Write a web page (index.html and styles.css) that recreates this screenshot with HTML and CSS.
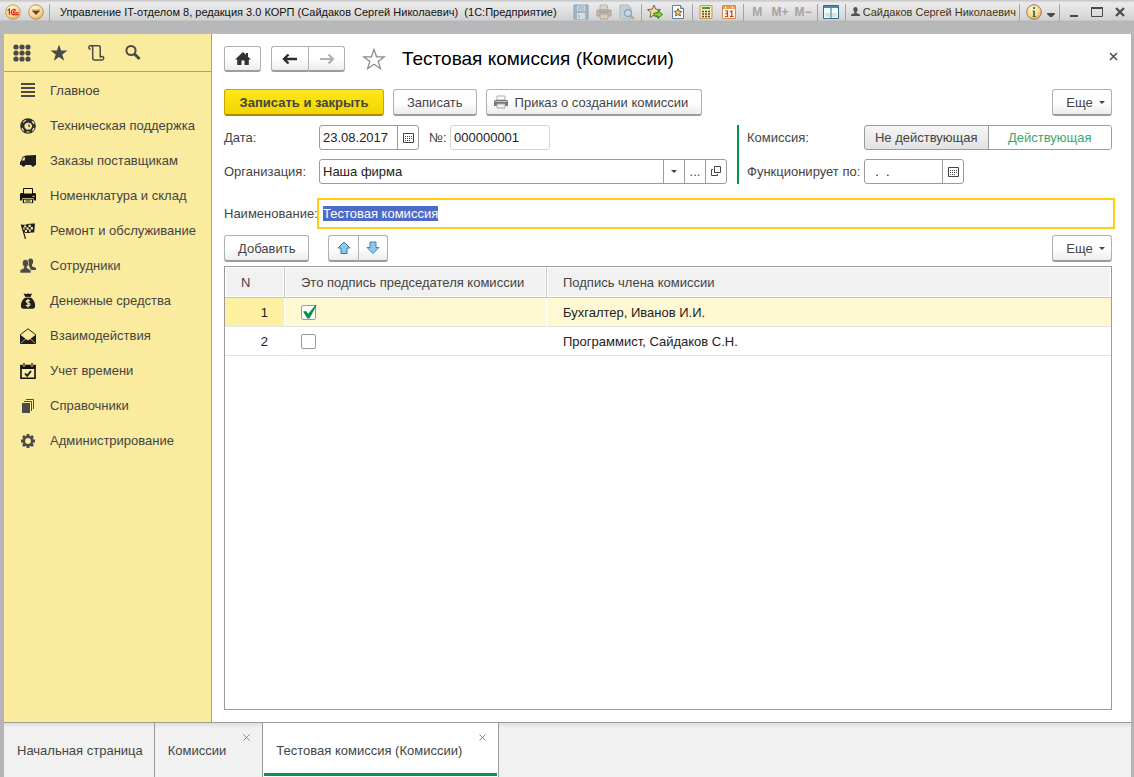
FILE: index.html
```html
<!DOCTYPE html>
<html lang="ru">
<head>
    <meta charset="UTF-8">
    <meta name="viewport" content="width=device-width, initial-scale=1.0">
    <title>Тестовая комиссия (Комиссии)</title>
    <link rel="stylesheet" href="styles.css">
</head>
<body>
    <header class="titlebar">
        <button class="tb-btn" aria-label="1С">
            <svg width="16" height="16" viewBox="0 0 16 16"><defs><radialGradient id="orb" cx=".4" cy=".3" r=".8"><stop offset="0" stop-color="#fff6d8"/><stop offset=".6" stop-color="#fbd78c"/><stop offset="1" stop-color="#d79a4a"/></radialGradient></defs><circle cx="8" cy="8" r="7.3" fill="url(#orb)" stroke="#b89468" stroke-width=".8"/><path d="M2.600 6.600l1.800-1.500v5.600M10.600 6.500C9.800 4.700 6.300 5.100 6.300 7.900c0 2 1.400 2.800 2.800 2.800h4.500M10.300 7.300c-1-.6-2-.3-2 .6 0 .8.700 1 1.500 1h3.800" fill="none" stroke="#dd2418" stroke-width="1.200"/></svg>
        </button>
        <button class="tb-btn tb-menu" aria-label="Главное меню">
            <svg width="16" height="16" viewBox="0 0 16 16"><circle cx="8" cy="8" r="7.3" fill="url(#orb)" stroke="#a88a68" stroke-width=".8"/><path d="M4 5.500h8V7H4z" fill="#b8966c"/><path d="M4 7h8l-4 4z" fill="#5e4a35"/></svg>
        </button>
        <span class="tb-sep"></span>
        <span class="tb-title">Управление IT-отделом 8, редакция 3.0 КОРП (Сайдаков Сергей Николаевич)&nbsp; (1С:Предприятие)</span>
        <div class="tb-tools">
            <button class="tb-btn" aria-label="Сохранить" disabled>
                <svg width="16" height="16" viewBox="0 0 16 16"><path d="M1 1h14v14H1z" fill="#9fb7c4" stroke="#86a2b2"/><path d="M4 1.500h8v5H4zM4 9h8v6H4z" fill="#d6dde0"/><path d="M5 3h6M5 5h6M6 11v3" stroke="#8fa8b5"/></svg>
            </button>
            <button class="tb-btn" aria-label="Печать" disabled>
                <svg width="16" height="16" viewBox="0 0 16 16"><path d="M4 1h7l1 5H4z" fill="#d8d6d4" stroke="#b5b0aa"/><path d="M1 6h14v6H1z" fill="#bdb8b3" stroke="#a8a29b"/><path d="M4 10h8v5H4z" fill="#d8cbbb" stroke="#b5a693"/><path d="M3 8h10" stroke="#999"/></svg>
            </button>
            <button class="tb-btn" aria-label="Просмотр" disabled>
                <svg width="16" height="16" viewBox="0 0 16 16"><path d="M1 1h8l3 3v11H1z" fill="#c3d0d7" stroke="#a9b9c2"/><circle cx="9" cy="9" r="3.5" fill="#c5d8e3" stroke="#8ba5b7" stroke-width="1.500"/><path d="M11.500 11.500l3.500 3.500" stroke="#b9a48c" stroke-width="2"/></svg>
            </button>
            <span class="tb-sep"></span>
            <button class="tb-btn" aria-label="Добавить в избранное">
                <svg width="16" height="16" viewBox="0 0 16 16"><path d="M7 1l1.800 4.200 4.700.4-3.500 3 1 4.900L7 11l-4 2.500 1-4.900-3.500-3 4.700-.4z" fill="#f6d9a0" stroke="#806449"/><path d="M7 9h4V6.500l4.500 4-4.500 4V12H7z" fill="#8fd53c" stroke="#2f7a1e"/></svg>
            </button>
            <button class="tb-btn" aria-label="Избранное">
                <svg width="16" height="16" viewBox="0 0 16 16"><path d="M2.500 1.500h8l3 3v10h-11z" fill="#fff" stroke="#5b7f99"/><path d="M10.500 1.500v3h3" fill="#cfe0ea" stroke="#5b7f99"/><path d="M8 4.500l1.200 2.600 2.700.2-2.100 1.900.7 2.800L8 10.500 5.500 12l.7-2.800-2.100-1.900 2.700-.2z" fill="#f1c16e" stroke="#5d4b3c" stroke-width=".8"/></svg>
            </button>
            <span class="tb-sep"></span>
            <button class="tb-btn" aria-label="Калькулятор">
                <svg width="16" height="16" viewBox="0 0 16 16"><path d="M2 1.500h12v13H2z" fill="#fbe9b7" stroke="#c2965a"/><path d="M4 3h8v2H4z" fill="#3f9b48"/><path d="M4 7.500h8M4 10h8M4 12.500h8" stroke="#624a2c" stroke-width="1.500" stroke-dasharray="2 1"/></svg>
            </button>
            <button class="tb-btn" aria-label="Календарь">
                <svg width="16" height="16" viewBox="0 0 16 16"><path d="M1.500 1.500h13v13h-13z" fill="#fff7ea" stroke="#c98d55"/><path d="M2 2h12v3H2z" fill="#ee9d55"/><path d="M4 3.500h1M11 3.500h1" stroke="#fff" stroke-width="2"/><path d="M4 7h2.500v5.500H4M4.500 9.700h2M9 8l1.800-1v6M9 12.500h3.500" fill="none" stroke="#dd3311" stroke-width="1.200"/></svg>
            </button>
            <span class="tb-sep"></span>
            <button class="tb-btn tb-mem" disabled>M</button>
            <button class="tb-btn tb-mem" disabled>M+</button>
            <button class="tb-btn tb-mem" disabled>M−</button>
            <span class="tb-sep"></span>
            <button class="tb-btn" aria-label="Панели">
                <svg width="16" height="16" viewBox="0 0 16 16"><path d="M.5 1.500h15v13H.5z" fill="#f4fafc" stroke="#376b84"/><path d="M1 2h14v2H1z" fill="#478ca8"/><path d="M8 4v10" stroke="#376b84"/><path d="M2 9h5v4H2zM9 9h5v4H9z" fill="#d2e5ee"/></svg>
            </button>
            <span class="tb-sep"></span>
            <a class="tb-user" href="#">
                <svg width="9" height="10" viewBox="0 0 9 10"><path d="M4.500 0C6 0 6.800 1 6.600 2.700 6.500 4 6 4.600 5.500 5v1L9 7.500V9H0V7.500L3.500 6V5C3 4.600 2.500 4 2.400 2.700 2.200 1 3 0 4.500 0z" fill="#555"/></svg>
                Сайдаков Сергей Николаевич
            </a>
            <span class="tb-sep"></span>
            <button class="tb-btn" aria-label="Справка">
                <svg width="16" height="16" viewBox="0 0 16 16"><circle cx="8" cy="8" r="7.3" fill="url(#orb)" stroke="#927b5d"/><path d="M7 3h2v2H7zM6.500 6.500H9V12h1v1H6.500v-1H7V7.500h-.5z" fill="#53793a"/></svg>
            </button>
            <button class="tb-btn tb-drop" aria-label="Ещё">
                <svg width="8" height="5" viewBox="0 0 8 5"><path d="M0 0h8v1L5 4H3L0 1z" fill="#4c4c4c"/></svg>
            </button>
            <span class="tb-sep"></span>
            <button class="tb-btn" aria-label="Свернуть">
                <svg width="12" height="12" viewBox="0 0 12 12"><path d="M2 9h8v2H2z" fill="#4a4a4a"/></svg>
            </button>
            <button class="tb-btn" aria-label="Развернуть">
                <svg width="12" height="12" viewBox="0 0 12 12"><path d="M.5 2h11v8.500H.5z" fill="none" stroke="#4a4a4a"/><path d="M0 2h12" stroke="#4a4a4a" stroke-width="2"/></svg>
            </button>
            <button class="tb-btn" aria-label="Закрыть">
                <svg width="12" height="12" viewBox="0 0 12 12"><path d="M2 2l8 8M10 2l-8 8" stroke="#4a4a4a" stroke-width="2.200"/></svg>
            </button>
        </div>
    </header>

    <div class="workspace">
        <aside class="sidebar">
            <div class="side-tools">
                <button aria-label="Меню">
                    <svg width="18" height="18" viewBox="0 0 18 18" fill="#4a4a4a"><circle cx="3" cy="3" r="2.600"/><circle cx="9" cy="3" r="2.600"/><circle cx="15" cy="3" r="2.600"/><circle cx="3" cy="9" r="2.600"/><circle cx="9" cy="9" r="2.600"/><circle cx="15" cy="9" r="2.600"/><circle cx="3" cy="15" r="2.600"/><circle cx="9" cy="15" r="2.600"/><circle cx="15" cy="15" r="2.600"/></svg>
                </button>
                <button aria-label="Избранное">
                    <svg width="18" height="18" viewBox="0 0 18 18"><path d="M9 .5l2.100 6h6.400l-5.200 3.900 2 6.300L9 12.900l-5.300 3.800 2-6.300L.5 6.500h6.400z" fill="#4a4a4a"/></svg>
                </button>
                <button aria-label="История">
                    <svg width="18" height="18" viewBox="0 0 18 18"><path d="M3.500 5.200a1.800 1.800 0 1 1 .7-3.500h7.800q1.200 0 1.200 1.300V13M4.200 1.700q1.500.5 1.500 2.300v9.500c0 1.500.7 2.500 1.800 2.500H15a1.800 1.800 0 1 0-1.800-2.300" fill="none" stroke="#4a4a4a" stroke-width="1.500"/></svg>
                </button>
                <button aria-label="Поиск">
                    <svg width="18" height="18" viewBox="0 0 18 18" fill="none" stroke="#4a4a4a"><circle cx="7" cy="6.500" r="4.600" stroke-width="2"/><path d="M10.500 10l5 5" stroke-width="3"/></svg>
                </button>
            </div>
            <nav class="side-menu">
                <a href="#">
                    <svg class="icon" viewBox="0 0 16 16"><path d="M1 0h14v2H1zM1 4h14v2H1zM1 8h14v2H1zM1 12h14v2H1z" fill="#4a4a4a"/></svg>
                    Главное
                </a>
                <a href="#">
                    <svg class="icon" viewBox="0 0 16 16"><circle cx="8" cy="8" r="7.800" fill="#2e2e2e"/><path d="M8 4.500l3.300 1.300.9 2.700-1.900 2.900H6.400L4.300 9l.6-3z" fill="#faec9e"/><path d="M3.200 4.500C4 3.300 4.800 2.600 6 2.200M12 3.200c1 .8 1.600 1.700 2 2.800M2 10c.5 1.300 1 2 1.800 2.700M14 10c-.4 1.200-1 2-1.800 2.800M6.500 14h3" stroke="#faec9e" stroke-width="1.200" fill="none"/><path d="M8.500 6.500l1 2.500" stroke="#2e2e2e" stroke-width="1.300"/></svg>
                    Техническая поддержка
                </a>
                <a href="#">
                    <svg class="icon" viewBox="0 0 16 16"><path d="M6 2.500l10-.5V12h-1a2 2 0 0 1-3.800 0H5.400a2 2 0 0 1-3.800 0H0V9l1-1 1.500-4L4.500 3z" fill="#1e1e1e"/><path d="M3.200 4.500L2 7.500h2.500l.8-3z" fill="#faec9e"/><circle cx="3.500" cy="12" r="1.500" fill="#1e1e1e"/><circle cx="13" cy="12" r="1.500" fill="#1e1e1e"/></svg>
                    Заказы поставщикам
                </a>
                <a href="#">
                    <svg class="icon" viewBox="0 0 16 16"><path d="M1 5h14l1 1v6.500H0V6z" fill="#111"/><path d="M3.500.500h9v5.500h-9z" fill="#faec9e" stroke="#111"/><path d="M2.500 10.500h11v5h-11z" fill="#111" stroke="#faec9e" stroke-width=".7"/><path d="M4 11.700h8v2.800H4z" fill="#faec9e"/><path d="M5.500 13h5" stroke="#111"/><path d="M12.500 8.300h2" stroke="#faec9e"/></svg>
                    Номенклатура и склад
                </a>
                <a href="#">
                    <svg class="icon" viewBox="0 0 16 16"><path d="M1 1c2 1.300 4 .8 6 .2S12 .7 15 .5l-.8 9c-3-.4-4 .3-6 .5S4.500 10.200 3.500 9z" fill="#1e1e1e"/><path d="M4 2.500h2l.3 2-2 .1zM8.500 1.800h2.300V4H8.600zM6.300 4.500l2.300-.3.200 2.400-2.200.2zM10.800 4H13l-.2 2.500h-2.100zM2.500 4.800l1.800-.2.500 2.200-1.700.2zM4.900 7l1.900-.1.300 2.200-2 .1zM8.800 6.600l1.900-.1v2.100l-1.700.3z" fill="#faec9e"/><path d="M1.500 2L5.500 16" stroke="#1e1e1e" stroke-width="1.200"/></svg>
                    Ремонт и обслуживание
                </a>
                <a href="#">
                    <svg class="icon" viewBox="0 0 16 16"><path d="M10.500.5c2 0 2.800 1.500 2.600 3.500-.1 1.400-.6 2.200-1.100 2.700v1.500l4 1.800V12h-5l-3-6C7.600 2.500 8.500.500 10.500.500z" fill="#4a4a4a"/><path d="M5.500 1.500C8 1.500 8.800 3.300 8.500 5.500 8.400 7 7.800 8 7.200 8.500v1.600l3.800 2v3H0v-3l3.800-2V8.500C3.200 8 2.600 7 2.500 5.500 2.200 3.300 3 1.500 5.500 1.500z" fill="#4a4a4a" stroke="#faec9e" stroke-width=".7"/></svg>
                    Сотрудники
                </a>
                <a href="#">
                    <svg class="icon" viewBox="0 0 16 16"><path d="M3.500.5l2.500.5 2-.5 2 .5 2-.5-1.500 3.800C14 7 15.500 10 15 13.500c-.2 1.500-1 2.200-2.500 2.200h-9C2 15.700 1.200 15 1 13.500.500 10 2 7 5.500 4.300z" fill="#1e1e1e"/><path d="M5 4.300h6" stroke="#faec9e" stroke-width=".7"/><path d="M10 8c-.8-.8-3.800-1-3.800.6C6.200 10.300 10 9.500 10 11.500c0 1.700-3 1.700-4 .6M8 6v8.500" fill="none" stroke="#faec9e" stroke-width="1.200"/></svg>
                    Денежные средства
                </a>
                <a href="#">
                    <svg class="icon" viewBox="0 0 16 16"><path d="M.5 6.500L8 .8l7.500 5.700v9H.5z" fill="#faec9e" stroke="#222"/><path d="M0 6.500l5.500 4.300L0 15.500zM16 6.500l-5.500 4.300 5.500 4.700zM.5 15.800L6 11l2 1.500 2-1.500 5.500 4.800z" fill="#1e1e1e"/></svg>
                    Взаимодействия
                </a>
                <a href="#">
                    <svg class="icon" viewBox="0 0 16 16"><path d="M1 2.500h14v12.700H1z" fill="#faec9e" stroke="#111" stroke-width="1.600"/><path d="M.5 2h15v4H.5z" fill="#111"/><path d="M4 0v3.500M12 0v3.500" stroke="#faec9e" stroke-width="2.400"/><path d="M4 0v3M12 0v3" stroke="#111" stroke-width="1.200"/><path d="M5 10.500l2.200 2.300L11 8" stroke="#111" stroke-width="1.800" fill="none"/></svg>
                    Учет времени
                </a>
                <a href="#">
                    <svg class="icon" viewBox="0 0 16 16"><path d="M2 5h8v10H2z" fill="#4a4a4a"/><path d="M4 3.500h7.500V13M6 1.500h7.500V11" fill="none" stroke="#4a4a4a"/></svg>
                    Справочники
                </a>
                <a href="#">
                    <svg class="icon" viewBox="0 0 16 16"><circle cx="8" cy="8" r="4.200" fill="none" stroke="#4a4a4a" stroke-width="2.600"/><path d="M8 1v2.500M8 12.500V15M1 8h2.500M12.500 8H15M3 3l1.800 1.800M11.200 11.200L13 13M3 13l1.800-1.800M11.200 4.800L13 3" stroke="#4a4a4a" stroke-width="2.800"/></svg>
                    Администрирование
                </a>
            </nav>
        </aside>

        <main class="content">
            <div class="page-head">
                <button class="btn nav-btn" aria-label="Начальная страница">
                    <svg width="16" height="14" viewBox="0 0 16 14"><path d="M8 0l3 2.800V1h2v3.700l3 2.800h-2.200V13H9.500V8.500h-3V13H2.200V7.500H0z" fill="#333"/></svg>
                </button>
                <div class="btn-group history">
                    <button class="btn" aria-label="Назад">
                        <svg width="16" height="12" viewBox="0 0 16 12"><path d="M15 6H2M6.500 1.500L2 6l4.500 4.500" fill="none" stroke="#2b2b2b" stroke-width="2.400"/></svg>
                    </button>
                    <button class="btn" aria-label="Вперед" disabled>
                        <svg width="16" height="12" viewBox="0 0 16 12"><path d="M1 6h13M9.500 1.500L14 6l-4.500 4.500" fill="none" stroke="#b0b0b0" stroke-width="2.200"/></svg>
                    </button>
                </div>
                <button class="fav" aria-label="В избранное">
                    <svg width="24" height="22" viewBox="0 0 24 22"><path d="M12 1.500l2.600 7.300h7.700l-6.100 4.600 2.300 7.300L12 16.300l-6.500 4.400 2.300-7.300-6.100-4.600h7.700z" fill="#fff" stroke="#8a8a8a" stroke-width="1.200"/></svg>
                </button>
                <h1>Тестовая комиссия (Комиссии)</h1>
                <button class="close" aria-label="Закрыть">
                    <svg width="9" height="9" viewBox="0 0 9 9"><path d="M1 1l7 7M8 1L1 8" stroke="#444" stroke-width="1.400"/></svg>
                </button>
            </div>

            <div class="toolbar">
                <button class="btn btn-primary">Записать и закрыть</button>
                <button class="btn">Записать</button>
                <button class="btn btn-print">
                    <svg width="14" height="14" viewBox="0 0 14 14"><path d="M3 1h8v4H3z" fill="#fff" stroke="#aaa"/><path d="M1 5h12l1 1v5H0V6z" fill="#777"/><path d="M1 6.500h12" stroke="#c5c5c5"/><path d="M3 9h8v4H3z" fill="#f3f3f3" stroke="#aaa"/></svg>
                    Приказ о создании комиссии
                </button>
                <button class="btn btn-more">Еще <span class="caret"></span></button>
            </div>

            <div class="form-top">
                <div class="form-left">
                    <div class="row">
                        <label class="label" for="date">Дата:</label>
                        <div class="field field-date">
                            <input id="date" type="text" value="23.08.2017">
                            <button aria-label="Выбрать дату">
                                <svg width="11" height="10" viewBox="0 0 11 10"><path d="M.5.5h10v9H.5z" fill="none" stroke="#444"/><path d="M2 3.500h7M2 5.500h7M2 7.500h5" stroke="#444" stroke-dasharray="1 1"/></svg>
                            </button>
                        </div>
                        <label class="label-num" for="num">№:</label>
                        <div class="field field-num">
                            <input id="num" type="text" value="000000001">
                        </div>
                    </div>
                    <div class="row">
                        <label class="label" for="org">Организация:</label>
                        <div class="field field-org">
                            <input id="org" type="text" value="Наша фирма">
                            <button aria-label="Список"><span class="caret"></span></button>
                            <button aria-label="Выбрать">...</button>
                            <button aria-label="Открыть">
                                <svg width="11" height="11" viewBox="0 0 11 11" fill="none" stroke="#444"><path d="M3.500.5h6v6h-6z"/><path d="M2 3.500H.5v6h6V8"/></svg>
                            </button>
                        </div>
                    </div>
                </div>
                <div class="form-right">
                    <div class="row">
                        <span class="label">Комиссия:</span>
                        <div class="segment">
                            <button>Не действующая</button>
                            <button class="on">Действующая</button>
                        </div>
                    </div>
                    <div class="row">
                        <label class="label" for="until">Функционирует по:</label>
                        <div class="field field-date">
                            <input id="until" type="text" value="&nbsp; .&nbsp; .">
                            <button aria-label="Выбрать дату">
                                <svg width="11" height="10" viewBox="0 0 11 10"><path d="M.5.5h10v9H.5z" fill="none" stroke="#444"/><path d="M2 3.500h7M2 5.500h7M2 7.500h5" stroke="#444" stroke-dasharray="1 1"/></svg>
                            </button>
                        </div>
                    </div>
                </div>
            </div>

            <div class="row row-name">
                <label class="label" for="name">Наименование:</label>
                <input id="name" class="name" type="text" value="Тестовая комиссия">
            </div>

            <div class="toolbar list-tools">
                <button class="btn">Добавить</button>
                <div class="btn-group arrows">
                    <button class="btn" aria-label="Вверх">
                        <svg width="14" height="14" viewBox="0 0 14 14"><path d="M7 1l6 6h-3v5.500H4V7H1z" fill="#8cc8ee" stroke="#33789f"/></svg>
                    </button>
                    <button class="btn" aria-label="Вниз">
                        <svg width="14" height="14" viewBox="0 0 14 14"><path d="M7 12.500l6-6h-3V1H4v5.500H1z" fill="#8cc8ee" stroke="#4b80a8"/></svg>
                    </button>
                </div>
                <button class="btn btn-more">Еще <span class="caret"></span></button>
            </div>

            <div class="table-box">
                <table>
                    <thead>
                        <tr>
                            <th class="col-n">N</th>
                            <th class="col-head">Это подпись председателя комиссии</th>
                            <th>Подпись члена комиссии</th>
                        </tr>
                    </thead>
                    <tbody>
                        <tr class="selected">
                            <td class="col-n">1</td>
                            <td><input type="checkbox" aria-label="Председатель, строка 1" checked></td>
                            <td>Бухгалтер, Иванов И.И.</td>
                        </tr>
                        <tr>
                            <td class="col-n">2</td>
                            <td><input type="checkbox" aria-label="Председатель, строка 2"></td>
                            <td>Программист, Сайдаков С.Н.</td>
                        </tr>
                    </tbody>
                </table>
            </div>
        </main>
    </div>

    <nav class="tabs">
        <a class="tab" href="#">Начальная страница</a>
        <div class="tab closable">
            <a href="#">Комиссии</a>
            <button aria-label="Закрыть вкладку"><svg width="7" height="7" viewBox="0 0 7 7"><path d="M.5.5l6 6M6.500.5l-6 6" stroke="#888"/></svg></button>
        </div>
        <div class="tab closable active">
            <a href="#">Тестовая комиссия (Комиссии)</a>
            <button aria-label="Закрыть вкладку"><svg width="7" height="7" viewBox="0 0 7 7"><path d="M.5.5l6 6M6.500.5l-6 6" stroke="#888"/></svg></button>
        </div>
    </nav>

    <script>
        const nameInput = document.getElementById("name");
        nameInput.focus();
        nameInput.select();
    </script>
</body>
</html>
```
FILE: styles.css
```css
* {
    box-sizing: border-box;
}

body {
    display: flex;
    flex-direction: column;
    min-height: 100vh;
    margin: 0;
    font-family: "Liberation Sans", Arial, sans-serif;
    font-size: 13px;
    color: #444;
    background-color: #b5b5b7;
}

button,
input {
    font: inherit;
    color: inherit;
}

button {
    padding: 0;
    border: none;
    background: none;
    cursor: pointer;
}

a {
    color: inherit;
    text-decoration: none;
}

svg {
    display: block;
    flex: none;
}

/* Window title */
.titlebar {
    display: flex;
    align-items: center;
    height: 34px;
    padding: 0 3px 10px 5px;
    font-size: 11px;
    color: #111;
    background: linear-gradient(#c4c4c4 0, #ececec 3px, #d2d2d2 20px, #b6b7b9 21px, #b9babc 34px);
}

.tb-title {
    flex: 1;
    min-width: 0;
    margin-left: 5px;
    overflow: hidden;
    white-space: nowrap;
}

.tb-btn {
    display: flex;
    align-items: center;
    justify-content: center;
}

.tb-menu {
    margin-left: 7px;
}

.tb-sep {
    width: 1px;
    height: 17px;
    margin: 0 5px;
    background-color: #a2a2a2;
}

.tb-tools {
    display: flex;
    align-items: center;
}

.tb-tools .tb-sep {
    margin: 0 2px;
}

.tb-tools .tb-btn {
    min-width: 23px;
}

.tb-tools .tb-mem {
    font-size: 12px;
    font-weight: bold;
    color: #aaa19b;
}

.tb-user {
    display: flex;
    align-items: center;
    gap: 3px;
    padding: 0 1px 0 3px;
    color: #443311;
    white-space: nowrap;
}

.tb-tools .tb-drop {
    min-width: 12px;
    padding-top: 6px;
}

.workspace {
    display: flex;
    flex: 1;
    margin: 0 3px 0 4px;
}

/* Sections panel */
.sidebar {
    width: 208px;
    background-color: #fbeb9e;
    border-right: 1px solid #bfa91d;
}

.side-tools {
    display: flex;
    align-items: center;
    gap: 19px;
    height: 38px;
    padding-left: 9px;
    border-bottom: 1px solid #bfa91d;
}

.side-menu {
    padding-top: 1px;
}

.side-menu a {
    display: flex;
    align-items: center;
    gap: 14px;
    height: 35px;
    padding-left: 16px;
    white-space: nowrap;
}

.icon {
    width: 16px;
    height: 16px;
}

/* Form */
.content {
    display: flex;
    flex: 1;
    flex-direction: column;
    min-width: 0;
    padding: 12px 19px 12px 12px;
    background-color: #fff;
}

.page-head {
    display: flex;
    align-items: center;
    height: 26px;
}

.page-head h1 {
    flex: 1;
    margin: 0 0 0 16px;
    font-size: 19px;
    font-weight: normal;
    color: #000;
}

.btn {
    display: flex;
    align-items: center;
    justify-content: center;
    height: 27px;
    padding: 0 13px;
    border: 1px solid #b0b0b0;
    border-bottom: 2px solid #9c9c9c;
    border-radius: 3px;
    background: linear-gradient(#fff 50%, #ececec);
    white-space: nowrap;
}

.nav-btn {
    width: 37px;
    height: 26px;
    padding: 0;
}

.btn-group {
    display: flex;
}

.btn-group .btn {
    padding: 0;
}

.btn-group .btn:first-child {
    border-right: none;
    border-radius: 3px 0 0 3px;
}

.btn-group .btn:last-child {
    border-radius: 0 3px 3px 0;
}

.history {
    margin-left: 10px;
}

.history .btn {
    width: 37px;
    height: 26px;
}

.fav {
    margin-left: 17px;
}

.close {
    align-self: flex-start;
    padding: 6px;
    margin-right: -12px;
}

.toolbar {
    display: flex;
    gap: 9px;
    margin-top: 17px;
}

.btn-primary {
    min-width: 160px;
    border-color: #c8a800;
    border-bottom-color: #a88e00;
    background: linear-gradient(#ffe71a, #f2d500);
    font-weight: bold;
}

.btn-print {
    gap: 7px;
    padding-left: 7px;
}

.btn-more {
    gap: 6px;
    width: 60px;
    margin-left: auto;
    padding: 0 6px 0 13px;
}

.caret {
    border: 3px solid transparent;
    border-top-color: #444;
    border-bottom: none;
}

.form-top {
    display: flex;
    gap: 10px;
    margin-top: 9px;
}

.form-left {
    flex: 1;
}

.form-right {
    width: 375px;
    padding-left: 8px;
    border-left: 2px solid #009646;
}

.row {
    display: flex;
    align-items: center;
}

.row + .row {
    margin-top: 9px;
}

.label {
    width: 95px;
    white-space: nowrap;
}

.form-right .label {
    width: 117px;
}

.field {
    display: flex;
    height: 25px;
    border: 1px solid #9b9b9b;
    border-radius: 3px;
    background-color: #fff;
}

.field input {
    flex: 1;
    width: 0;
    min-width: 0;
    padding: 0 3px;
    border: none;
    background: none;
    color: #222;
    outline: none;
}

.field button {
    display: flex;
    align-items: center;
    justify-content: center;
    width: 21px;
    border-left: 1px solid #9b9b9b;
}

.field-date,
.field-num {
    width: 100px;
}

.field-num {
    border-color: #d4d4d4;
}

.label-num {
    width: 31px;
    padding-left: 10px;
}

.field-org {
    flex: 1;
}

.segment {
    display: flex;
    flex: 1;
    height: 25px;
    border: 1px solid #9b9b9b;
    border-radius: 3px;
    background: linear-gradient(#f6f6f6, #e2e2e2);
}

.segment button {
    flex: 1;
}

.segment .on {
    border-left: 1px solid #9b9b9b;
    border-radius: 0 2px 2px 0;
    background-color: #fff;
    color: #3aa76d;
}

.row-name {
    margin-top: 14px;
}

.row-name .label {
    width: 93px;
}

.name {
    flex: 1;
    height: 31px;
    margin-right: -3px;
    padding: 0 4px;
    border: 2px solid #fc1;
    outline: none;
    color: #222;
}

.name::selection {
    background-color: #4f69c6;
    color: #fff;
}

.list-tools {
    gap: 19px;
    margin-top: 6px;
}

.arrows .btn {
    width: 30px;
}

/* Commission members */
.table-box {
    flex: 1;
    margin-top: 4px;
    border: 1px solid #9b9b9b;
}

table {
    width: 100%;
    border-collapse: separate;
    border-spacing: 0;
    table-layout: fixed;
}

th,
td {
    padding: 0 16px;
    text-align: left;
    white-space: nowrap;
}

th {
    height: 31px;
    border-right: 1px solid #c8c8c8;
    border-bottom: 1px solid #c4c4c4;
    background-color: #f1f1f1;
    font-weight: normal;
    box-shadow: inset 0 0 0 1px #fff;
}

th:last-child {
    border-right: none;
}

td {
    height: 29px;
    border-bottom: 1px solid #e4e4e4;
    color: #222;
}

th.col-n {
    width: 60px;
}

.col-head {
    width: 262px;
}

td.col-n {
    text-align: right;
}

.selected td,
td.col-n {
    border-right: 1px solid #fff;
}

.selected td {
    background-color: #fff8d2;
}

.selected td.col-n {
    background-color: #fdf0a0;
}

.selected td:last-child {
    border-right: none;
}

input[type="checkbox"] {
    display: block;
    appearance: none;
    width: 15px;
    height: 15px;
    margin: 0;
    border: 1px solid #999;
    border-radius: 2px;
    background-color: #fff;
}

input[type="checkbox"]:checked::before {
    content: "";
    display: block;
    width: 15px;
    height: 14px;
    margin-top: -1px;
    background-color: #009646;
    clip-path: polygon(7% 50%, 27% 47%, 42% 66%, 92% 0, 100% 0, 50% 100%, 36% 100%);
}

/* Open windows */
.tabs {
    display: flex;
    height: 55px;
    margin: 0 3px 0 4px;
    border-top: 1px solid #9b9b9b;
    background: linear-gradient(#dedede, #f1f1f1 5px);
}

.tab {
    display: flex;
    align-items: center;
    padding: 0 11px 0 13px;
    border-right: 1px solid #9b9b9b;
    white-space: nowrap;
}

.closable {
    gap: 17px;
    padding-right: 12px;
}

.closable button {
    align-self: flex-start;
    margin-top: 11px;
}

.active {
    background: linear-gradient(#009646, #009646) 1px 50px / calc(100% - 2px) 3px no-repeat #fff;
}
```
